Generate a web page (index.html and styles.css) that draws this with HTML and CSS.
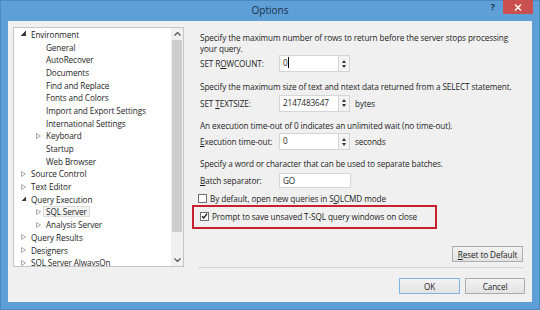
FILE: index.html
```html
<!DOCTYPE html>
<html lang="en">
<head>
    <meta charset="UTF-8">
    <title>Options</title>
    <link rel="stylesheet" href="styles.css">
</head>
<body>
    <div class="window">
        <!-- Title bar -->
        <header class="titlebar">
            <span></span>
            <span class="title">Options</span>
            <div class="controls">
                <span class="help">?</span>
                <span class="close">
                    <svg width="8" height="7" viewBox="0 0 8 7"><path d="M1 0.5 L7 6.5 M7 0.5 L1 6.5" stroke="#fff" stroke-width="1.4"/></svg>
                </span>
            </div>
        </header>

        <main class="client">
            <!-- Page tree -->
            <section class="tree">
                <ul class="nodes">
                    <li class="node"><i class="arrow open"></i>Environment</li>
                    <li class="node child"><i class="arrow"></i>General</li>
                    <li class="node child"><i class="arrow"></i>AutoRecover</li>
                    <li class="node child"><i class="arrow"></i>Documents</li>
                    <li class="node child"><i class="arrow"></i>Find and Replace</li>
                    <li class="node child"><i class="arrow"></i>Fonts and Colors</li>
                    <li class="node child"><i class="arrow"></i>Import and Export Settings</li>
                    <li class="node child"><i class="arrow"></i>International Settings</li>
                    <li class="node child"><i class="arrow closed"></i>Keyboard</li>
                    <li class="node child"><i class="arrow"></i>Startup</li>
                    <li class="node child"><i class="arrow"></i>Web Browser</li>
                    <li class="node"><i class="arrow closed"></i>Source Control</li>
                    <li class="node"><i class="arrow closed"></i>Text Editor</li>
                    <li class="node"><i class="arrow open"></i>Query Execution</li>
                    <li class="node child"><i class="arrow closed"></i><span class="selected">SQL Server</span></li>
                    <li class="node child"><i class="arrow closed"></i>Analysis Server</li>
                    <li class="node"><i class="arrow closed"></i>Query Results</li>
                    <li class="node"><i class="arrow closed"></i>Designers</li>
                    <li class="node"><i class="arrow closed"></i>SQL Server AlwaysOn</li>
                </ul>
                <div class="scrollbar">
                    <span class="sb-btn">
                        <svg width="7" height="4" viewBox="0 0 7 4"><path d="M0.5 3.5 L3.5 0.5 L6.5 3.5" fill="none" stroke="#555" stroke-width="1.2"/></svg>
                    </span>
                    <span class="thumb"></span>
                    <span class="track"></span>
                    <span class="sb-btn">
                        <svg width="7" height="4" viewBox="0 0 7 4"><path d="M0.5 0.5 L3.5 3.5 L6.5 0.5" fill="none" stroke="#555" stroke-width="1.2"/></svg>
                    </span>
                </div>
            </section>

            <!-- SQL Server page -->
            <section class="panel">
                <p class="desc first">Specify the maximum number of rows to return before the server stops processing your query.</p>
                <div class="field">
                    <label class="label">SET R<u>O</u>WCOUNT:</label>
                    <div class="input">0<span class="caret"></span></div>
                    <div class="spin"><i class="up"></i><i class="down"></i></div>
                </div>

                <p class="desc gap2">Specify the maximum size of text and ntext data returned from a SELECT statement.</p>
                <div class="field f2">
                    <label class="label">SET <u>T</u>EXTSIZE:</label>
                    <div class="input">2147483647</div>
                    <div class="spin"><i class="up"></i><i class="down"></i></div>
                    <span class="unit">bytes</span>
                </div>

                <p class="desc gap3">An execution time-out of 0 indicates an unlimited wait (no time-out).</p>
                <div class="field f3">
                    <label class="label"><u>E</u>xecution time-out:</label>
                    <div class="input">0</div>
                    <div class="spin"><i class="up"></i><i class="down"></i></div>
                    <span class="unit">seconds</span>
                </div>

                <p class="desc gap4">Specify a word or character that can be used to separate batches.</p>
                <div class="field f4">
                    <label class="label"><u>B</u>atch separator:</label>
                    <div class="input wide">GO</div>
                </div>

                <div class="check">
                    <span class="box"></span>
                    <span>By default, open new queries in S<u>Q</u>LCMD mode</span>
                </div>
                <div class="highlight">
                    <div class="check">
                        <span class="box">
                            <svg width="8" height="8" viewBox="0 0 8 8"><path d="M1.2 4.2 L3.2 6.3 L6.9 1.4" fill="none" stroke="#1a1a1a" stroke-width="1.5"/></svg>
                        </span>
                        <span>Prompt to save unsaved T-SQL query windows on close</span>
                    </div>
                </div>

                <div class="reset-row">
                    <button class="btn reset"><u>R</u>eset to Default</button>
                </div>
                <hr class="separator">
                <div class="actions">
                    <button class="btn default">OK</button>
                    <button class="btn">Cancel</button>
                </div>
            </section>
        </main>
    </div>
</body>
</html>
```

FILE: styles.css
```css
/* Reset default styles */
* {
    margin: 0;
    padding: 0;
    box-sizing: border-box;
}

html,
body {
    width: 540px;
    height: 310px;
    overflow: hidden;
}

body {
    font-family: "Open Sans", "Noto Sans", sans-serif;
    font-size: 8.2px;
    letter-spacing: -0.1px;
    color: #1e1e1e;
    background-color: #5e9fd8;
}

.window {
    width: 540px;
    height: 310px;
    background-color: #5e9fd8;
    border: 1px solid #4b8ac3;
    display: flex;
    flex-direction: column;
}

/* Title bar */
.titlebar {
    height: 20px;
    display: grid;
    grid-template-columns: 1fr auto 1fr;
    align-items: start;
}

.title {
    font-size: 10px;
    letter-spacing: 0;
    line-height: 19px;
    color: #1d2f45;
}

.controls {
    justify-self: end;
    display: flex;
    align-items: flex-start;
    margin-right: 6px;
}

.help {
    font-size: 9px;
    font-weight: bold;
    line-height: 12px;
    color: #1d2f45;
    margin-right: 8px;
}

.close {
    width: 30px;
    height: 14px;
    margin-top: -1px;
    background-color: #c9504f;
    display: flex;
    align-items: center;
    justify-content: center;
}

/* Client area */
.client {
    margin: 0 7px;
    height: 281px;
    background-color: #f0f0f0;
    display: flex;
    align-items: flex-start;
    padding: 6px 0 0 5px;
}

/* Tree */
.tree {
    width: 171px;
    height: 240px;
    border: 1px solid #c6c6c6;
    background-color: #fff;
    display: flex;
}

.nodes {
    flex: 1;
    list-style: none;
    overflow: hidden;
}

.node {
    height: 12.7px;
    display: flex;
    align-items: center;
    padding-left: 7px;
    white-space: nowrap;
}

.node.child {
    padding-left: 22px;
}

.arrow {
    width: 10px;
    height: 6px;
    flex-shrink: 0;
    display: block;
}

.arrow.open {
    background: linear-gradient(to bottom right, transparent 50%, #3c3c3c 50%) 0 0 / 5px 5px no-repeat;
}

.arrow.closed {
    background: url("data:image/svg+xml,%3Csvg xmlns='http://www.w3.org/2000/svg' width='5' height='6'%3E%3Cpath d='M0.5 0.5 L4.5 3 L0.5 5.5 Z' fill='none' stroke='%23a0a0a0' stroke-width='0.9'/%3E%3C/svg%3E") 0 0 / 5px 6px no-repeat;
}

.selected {
    background-color: #f3f3f3;
    border: 1px solid #dcdcdc;
    padding: 0 2px;
    margin-left: -3px;
    line-height: 9px;
}

.scrollbar {
    width: 12px;
    background-color: #f0f0f0;
    display: flex;
    flex-direction: column;
}

.sb-btn {
    height: 12px;
    display: flex;
    align-items: center;
    justify-content: center;
}

.thumb {
    height: 192px;
    margin: 0 1px;
    background-color: #cdcdcd;
}

.track {
    flex: 1;
}

/* Right panel */
.panel {
    flex: 1;
    margin-left: 16px;
    padding-right: 9px;
    display: flex;
    flex-direction: column;
    align-items: flex-start;
}

.desc {
    line-height: 11px;
}

.desc.first {
    margin-top: 4.5px;
}

.desc.gap2 {
    margin-top: 8.5px;
}

.desc.gap3 {
    margin-top: 8px;
}

.desc.gap4 {
    margin-top: 7.5px;
}

.field {
    display: flex;
    align-items: center;
    height: 17px;
    margin-top: 1.5px;
}

.field.f2 {
    margin-top: 3px;
}

.field.f3 {
    margin-top: 2.5px;
}

.field.f4 {
    height: 15px;
    margin-top: 4px;
}

.label {
    width: 79px;
}

.input {
    width: 60px;
    height: 100%;
    background-color: #fff;
    border: 1px solid #d5d5d5;
    padding: 0 3px;
    display: flex;
    align-items: flex-start;
    line-height: 13px;
}

.input.wide {
    width: 72px;
}

.caret {
    width: 1px;
    height: 11px;
    margin-top: 1px;
    background-color: #000;
}

.spin {
    width: 11px;
    height: 100%;
    border: 1px solid #d5d5d5;
    border-left: none;
    background-color: #f4f4f4;
    display: flex;
    flex-direction: column;
    align-items: center;
    justify-content: center;
    gap: 2px;
}

.spin i {
    width: 0;
    height: 0;
    border-left: 2.5px solid transparent;
    border-right: 2.5px solid transparent;
}

.spin .up {
    border-bottom: 3px solid #333;
}

.spin .down {
    border-top: 3px solid #333;
}

.unit {
    margin-left: 5px;
}

/* Checkboxes */
.check {
    height: 12px;
    margin-top: 4.5px;
    margin-left: -2px;
    display: flex;
    align-items: center;
    gap: 3px;
    white-space: nowrap;
}

.box {
    width: 9px;
    height: 9px;
    border: 1px solid #707070;
    background-color: #fff;
    display: flex;
    align-items: center;
    justify-content: center;
}

.highlight {
    width: 245px;
    height: 24px;
    margin-top: 1px;
    margin-left: -8px;
    border: 2px solid #c8202f;
    padding-left: 6px;
    display: flex;
    align-items: flex-start;
}

.highlight .check {
    margin-top: 3px;
    margin-left: 0;
}

/* Buttons */
.reset-row {
    align-self: stretch;
    display: flex;
    justify-content: flex-end;
    margin-top: 17px;
}

.btn {
    font-family: inherit;
    font-size: 8.2px;
    letter-spacing: -0.1px;
    color: #1e1e1e;
    height: 16px;
    border: 1px solid #acacac;
    background: linear-gradient(#f2f2f2, #e3e3e3);
}

.reset {
    width: 71px;
}

.separator {
    align-self: stretch;
    margin-top: 5px;
    margin-left: -2px;
    border: none;
    border-top: 1px solid #d5d5d5;
}

.actions {
    align-self: flex-end;
    display: flex;
    gap: 5px;
    margin-top: 10px;
    margin-right: -2px;
}

.actions .btn {
    width: 60px;
}

.actions .default {
    width: 61px;
    border-color: #7eb4ea;
}
```
